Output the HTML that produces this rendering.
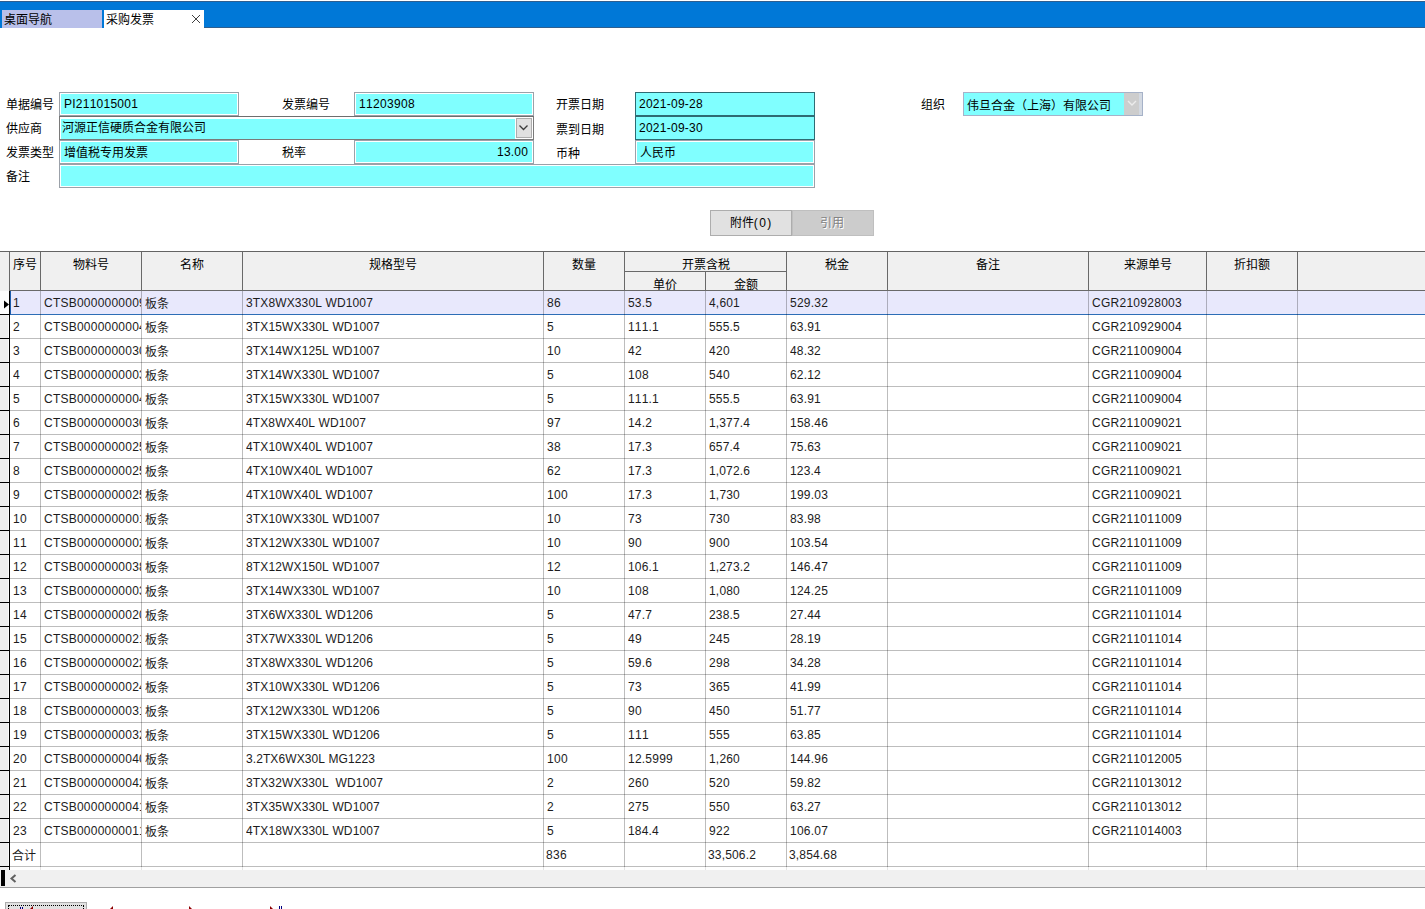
<!DOCTYPE html>
<html lang="zh-CN">
<head>
<meta charset="utf-8">
<title>采购发票</title>
<style>
html,body{margin:0;padding:0;}
body{width:1425px;height:909px;overflow:hidden;background:#fff;position:relative;
 font-family:"Liberation Sans",sans-serif;font-size:12px;color:#000;font-kerning:none;font-variant-ligatures:none;text-rendering:optimizeSpeed;}
div,span{box-sizing:border-box;}
.a{position:absolute;white-space:nowrap;}
.lbl{position:absolute;white-space:nowrap;height:14px;line-height:14px;}
.fld{position:absolute;height:24px;border:1px solid #9ba1a9;background:#80ffff;box-shadow:inset 0 0 0 1px #fff;
 line-height:22px;padding-left:4px;white-space:nowrap;overflow:hidden;}
.date{position:absolute;height:24px;border:1px solid #2e6b73;background:#80ffff;line-height:22px;padding-left:3px;white-space:nowrap;}
.hl{position:absolute;height:1px;}
.vl{position:absolute;width:1px;}
.hd{position:absolute;text-align:center;white-space:nowrap;height:14px;line-height:14px;}
.c{position:absolute;white-space:nowrap;overflow:hidden;height:23px;line-height:25px;color:#1c1c1c;}
.k{position:relative;top:1px;}
</style>
</head>
<body>
<div class="a" style="left:0;top:1px;width:1425px;height:27px;background:#0078d7;border-top:1px solid #2f5f8f;"></div>
<div class="hl" style="left:204px;top:27px;width:1221px;background:#2f5f8f;"></div>
<div class="a" style="left:2px;top:10px;width:100px;height:18px;background:#b9c0ea;line-height:21px;padding-left:2px;overflow:hidden;">桌面导航</div>
<div class="a" style="left:104px;top:10px;width:100px;height:18px;background:#fff;line-height:21px;padding-left:2px;overflow:hidden;">采购发票</div>
<svg class="a" style="left:191px;top:14px;" width="10" height="10" viewBox="0 0 10 10"><path d="M1 1 L9 9 M9 1 L1 9" stroke="#404040" stroke-width="1" fill="none"/></svg>
<div class="lbl" style="left:6px;top:98px;">单据编号</div>
<div class="lbl" style="left:6px;top:122px;">供应商</div>
<div class="lbl" style="left:6px;top:146px;">发票类型</div>
<div class="lbl" style="left:6px;top:170px;">备注</div>
<div class="lbl" style="left:282px;top:98px;">发票编号</div>
<div class="lbl" style="left:282px;top:146px;">税率</div>
<div class="lbl" style="left:556px;top:98px;">开票日期</div>
<div class="lbl" style="left:556px;top:123px;">票到日期</div>
<div class="lbl" style="left:556px;top:147px;">币种</div>
<div class="lbl" style="left:921px;top:98px;">组织</div>
<div class="fld" style="left:59px;top:92px;width:180px;"><span style="letter-spacing:0.24px">PI211015001</span></div>
<div class="fld" style="left:354px;top:92px;width:180px;"><span style="letter-spacing:0.33px">11203908</span></div>
<div class="a" style="left:59px;top:116px;width:475px;height:24px;border:1px solid #7a7a7a;background:#80ffff;border-top-color:#6e6e6e;box-shadow:inset 1px 2px 0 0 #fff;line-height:22px;padding-left:2px;">河源正信硬质合金有限公司</div>
<div class="a" style="left:515px;top:117px;width:18px;height:22px;background:#fff;"></div>
<div class="a" style="left:516px;top:118px;width:16px;height:20px;background:#e1e1e1;border:1px solid #adadad;"></div>
<svg class="a" style="left:519px;top:125px;" width="9" height="6" viewBox="0 0 9 6"><path d="M0.5 0.5 L4.5 4.5 L8.5 0.5" stroke="#3c3c3c" stroke-width="1.3" fill="none"/></svg>
<div class="fld" style="left:59px;top:140px;width:180px;"><span class="k">增值税专用发票</span></div>
<div class="fld" style="left:354px;top:140px;width:180px;text-align:right;padding-right:5px;"><span style="letter-spacing:0.19px">13.00</span></div>
<div class="date" style="left:635px;top:92px;width:180px;"><span style="letter-spacing:0.26px">2021-09-28</span></div>
<div class="date" style="left:635px;top:116px;width:180px;"><span style="letter-spacing:0.26px">2021-09-30</span></div>
<div class="fld" style="left:635px;top:140px;width:180px;"><span class="k">人民币</span></div>
<div class="fld" style="left:59px;top:164px;width:756px;"></div>
<div class="a" style="left:963px;top:92px;width:180px;height:24px;border:1px solid #a6b2c8;background:#80ffff;line-height:26px;padding-left:3px;overflow:hidden;">伟旦合金（上海）有限公司</div>
<div class="a" style="left:1124px;top:93px;width:15px;height:22px;background:#cdcdcd;"></div>
<div class="a" style="left:1139px;top:93px;width:3px;height:22px;background:#d3d9e2;"></div>
<svg class="a" style="left:1127px;top:100px;" width="10" height="7" viewBox="0 0 10 7"><path d="M1 1 L5 5 L9 1" stroke="#ececec" stroke-width="1.4" fill="none"/></svg>
<div class="a" style="left:710px;top:210px;width:82px;height:26px;background:#e1e1e1;border:1px solid #adadad;text-align:center;line-height:24px;padding-right:1px;">附件<span style="letter-spacing:1.3px;margin-right:-1.3px;">(0)</span></div>
<div class="a" style="left:792px;top:210px;width:82px;height:26px;background:#cccccc;border:1px solid #bfbfbf;text-align:center;line-height:24px;color:#838383;text-shadow:1px 1px 0 #fff;padding-right:3px;">引用</div>
<div class="a" style="left:0;top:251px;width:1425px;height:40px;background:#f0f0f0;border-top:1px solid #646464;"></div>
<div class="hl" style="left:9px;top:290px;width:1416px;background:#696969;"></div>
<div class="vl" style="left:9px;top:252px;height:38px;background:#696969;"></div>
<div class="vl" style="left:40px;top:252px;height:38px;background:#696969;"></div>
<div class="vl" style="left:141px;top:252px;height:38px;background:#696969;"></div>
<div class="vl" style="left:242px;top:252px;height:38px;background:#696969;"></div>
<div class="vl" style="left:543px;top:252px;height:38px;background:#696969;"></div>
<div class="vl" style="left:624px;top:252px;height:38px;background:#696969;"></div>
<div class="vl" style="left:705px;top:272px;height:18px;background:#696969;"></div>
<div class="vl" style="left:786px;top:252px;height:38px;background:#696969;"></div>
<div class="vl" style="left:887px;top:252px;height:38px;background:#696969;"></div>
<div class="vl" style="left:1088px;top:252px;height:38px;background:#696969;"></div>
<div class="vl" style="left:1206px;top:252px;height:38px;background:#696969;"></div>
<div class="vl" style="left:1297px;top:252px;height:38px;background:#696969;"></div>
<div class="hl" style="left:625px;top:271px;width:161px;background:#696969;"></div>
<div class="hd" style="left:10px;top:258px;width:30px;">序号</div>
<div class="hd" style="left:41px;top:258px;width:100px;">物料号</div>
<div class="hd" style="left:142px;top:258px;width:100px;">名称</div>
<div class="hd" style="left:243px;top:258px;width:300px;">规格型号</div>
<div class="hd" style="left:544px;top:258px;width:80px;">数量</div>
<div class="hd" style="left:625px;top:258px;width:161px;">开票含税</div>
<div class="hd" style="left:625px;top:278px;width:80px;">单价</div>
<div class="hd" style="left:706px;top:278px;width:80px;">金额</div>
<div class="hd" style="left:787px;top:258px;width:100px;">税金</div>
<div class="hd" style="left:888px;top:258px;width:200px;">备注</div>
<div class="hd" style="left:1089px;top:258px;width:117px;">来源单号</div>
<div class="hd" style="left:1207px;top:258px;width:90px;">折扣额</div>
<div class="a" style="left:0;top:291px;width:9px;height:579px;background:#eeeeee;border-right:1px solid #fafafa;"></div>
<div class="a" style="left:0;top:291px;width:9px;height:23px;background:#fcfcfc;"></div>
<div class="a" style="left:10px;top:291px;width:1415px;height:23px;background:#e8e8fc;"></div>
<div class="hl" style="left:10px;top:314px;width:1415px;background:#2d6db6;"></div>
<div class="hl" style="left:0;top:314px;width:10px;background:#000;"></div>
<div class="hl" style="left:10px;top:338px;width:1415px;background:rgba(0,0,0,0.26);"></div>
<div class="hl" style="left:0;top:338px;width:10px;background:#000;"></div>
<div class="hl" style="left:10px;top:362px;width:1415px;background:rgba(0,0,0,0.26);"></div>
<div class="hl" style="left:0;top:362px;width:10px;background:#000;"></div>
<div class="hl" style="left:10px;top:386px;width:1415px;background:rgba(0,0,0,0.26);"></div>
<div class="hl" style="left:0;top:386px;width:10px;background:#000;"></div>
<div class="hl" style="left:10px;top:410px;width:1415px;background:rgba(0,0,0,0.26);"></div>
<div class="hl" style="left:0;top:410px;width:10px;background:#000;"></div>
<div class="hl" style="left:10px;top:434px;width:1415px;background:rgba(0,0,0,0.26);"></div>
<div class="hl" style="left:0;top:434px;width:10px;background:#000;"></div>
<div class="hl" style="left:10px;top:458px;width:1415px;background:rgba(0,0,0,0.26);"></div>
<div class="hl" style="left:0;top:458px;width:10px;background:#000;"></div>
<div class="hl" style="left:10px;top:482px;width:1415px;background:rgba(0,0,0,0.26);"></div>
<div class="hl" style="left:0;top:482px;width:10px;background:#000;"></div>
<div class="hl" style="left:10px;top:506px;width:1415px;background:rgba(0,0,0,0.26);"></div>
<div class="hl" style="left:0;top:506px;width:10px;background:#000;"></div>
<div class="hl" style="left:10px;top:530px;width:1415px;background:rgba(0,0,0,0.26);"></div>
<div class="hl" style="left:0;top:530px;width:10px;background:#000;"></div>
<div class="hl" style="left:10px;top:554px;width:1415px;background:rgba(0,0,0,0.26);"></div>
<div class="hl" style="left:0;top:554px;width:10px;background:#000;"></div>
<div class="hl" style="left:10px;top:578px;width:1415px;background:rgba(0,0,0,0.26);"></div>
<div class="hl" style="left:0;top:578px;width:10px;background:#000;"></div>
<div class="hl" style="left:10px;top:602px;width:1415px;background:rgba(0,0,0,0.26);"></div>
<div class="hl" style="left:0;top:602px;width:10px;background:#000;"></div>
<div class="hl" style="left:10px;top:626px;width:1415px;background:rgba(0,0,0,0.26);"></div>
<div class="hl" style="left:0;top:626px;width:10px;background:#000;"></div>
<div class="hl" style="left:10px;top:650px;width:1415px;background:rgba(0,0,0,0.26);"></div>
<div class="hl" style="left:0;top:650px;width:10px;background:#000;"></div>
<div class="hl" style="left:10px;top:674px;width:1415px;background:rgba(0,0,0,0.26);"></div>
<div class="hl" style="left:0;top:674px;width:10px;background:#000;"></div>
<div class="hl" style="left:10px;top:698px;width:1415px;background:rgba(0,0,0,0.26);"></div>
<div class="hl" style="left:0;top:698px;width:10px;background:#000;"></div>
<div class="hl" style="left:10px;top:722px;width:1415px;background:rgba(0,0,0,0.26);"></div>
<div class="hl" style="left:0;top:722px;width:10px;background:#000;"></div>
<div class="hl" style="left:10px;top:746px;width:1415px;background:rgba(0,0,0,0.26);"></div>
<div class="hl" style="left:0;top:746px;width:10px;background:#000;"></div>
<div class="hl" style="left:10px;top:770px;width:1415px;background:rgba(0,0,0,0.26);"></div>
<div class="hl" style="left:0;top:770px;width:10px;background:#000;"></div>
<div class="hl" style="left:10px;top:794px;width:1415px;background:rgba(0,0,0,0.26);"></div>
<div class="hl" style="left:0;top:794px;width:10px;background:#000;"></div>
<div class="hl" style="left:10px;top:818px;width:1415px;background:rgba(0,0,0,0.26);"></div>
<div class="hl" style="left:0;top:818px;width:10px;background:#000;"></div>
<div class="hl" style="left:10px;top:842px;width:1415px;background:rgba(0,0,0,0.26);"></div>
<div class="hl" style="left:0;top:842px;width:10px;background:#000;"></div>
<div class="hl" style="left:10px;top:866px;width:1415px;background:rgba(0,0,0,0.26);"></div>
<div class="hl" style="left:0;top:866px;width:10px;background:#000;"></div>
<div class="vl" style="left:9px;top:291px;height:579px;background:#000;"></div>
<div class="vl" style="left:40px;top:291px;height:576px;background:rgba(0,0,0,0.26);"></div>
<div class="vl" style="left:40px;top:867px;height:3px;background:rgba(0,0,0,0.10);"></div>
<div class="vl" style="left:141px;top:291px;height:576px;background:rgba(0,0,0,0.26);"></div>
<div class="vl" style="left:141px;top:867px;height:3px;background:rgba(0,0,0,0.10);"></div>
<div class="vl" style="left:242px;top:291px;height:576px;background:rgba(0,0,0,0.26);"></div>
<div class="vl" style="left:242px;top:867px;height:3px;background:rgba(0,0,0,0.10);"></div>
<div class="vl" style="left:543px;top:291px;height:576px;background:rgba(0,0,0,0.26);"></div>
<div class="vl" style="left:543px;top:867px;height:3px;background:rgba(0,0,0,0.10);"></div>
<div class="vl" style="left:624px;top:291px;height:576px;background:rgba(0,0,0,0.26);"></div>
<div class="vl" style="left:624px;top:867px;height:3px;background:rgba(0,0,0,0.10);"></div>
<div class="vl" style="left:705px;top:291px;height:576px;background:rgba(0,0,0,0.26);"></div>
<div class="vl" style="left:705px;top:867px;height:3px;background:rgba(0,0,0,0.10);"></div>
<div class="vl" style="left:786px;top:291px;height:576px;background:rgba(0,0,0,0.26);"></div>
<div class="vl" style="left:786px;top:867px;height:3px;background:rgba(0,0,0,0.10);"></div>
<div class="vl" style="left:887px;top:291px;height:576px;background:rgba(0,0,0,0.26);"></div>
<div class="vl" style="left:887px;top:867px;height:3px;background:rgba(0,0,0,0.10);"></div>
<div class="vl" style="left:1088px;top:291px;height:576px;background:rgba(0,0,0,0.26);"></div>
<div class="vl" style="left:1088px;top:867px;height:3px;background:rgba(0,0,0,0.10);"></div>
<div class="vl" style="left:1206px;top:291px;height:576px;background:rgba(0,0,0,0.26);"></div>
<div class="vl" style="left:1206px;top:867px;height:3px;background:rgba(0,0,0,0.10);"></div>
<div class="vl" style="left:1297px;top:291px;height:576px;background:rgba(0,0,0,0.26);"></div>
<div class="vl" style="left:1297px;top:867px;height:3px;background:rgba(0,0,0,0.10);"></div>
<div class="vl" style="left:10px;top:291px;height:24px;background:#1d5cab;"></div>
<svg class="a" style="left:4px;top:300px;" width="6" height="9" viewBox="0 0 6 9"><path d="M0 0.5 L5 4.5 L0 8.5 Z" fill="#000"/></svg>
<div class="c" style="left:13px;top:291px;width:27px;"><span style="letter-spacing:0.33px">1</span></div>
<div class="c" style="left:44px;top:291px;width:97px;"><span style="letter-spacing:0.23px">CTSB0000000009</span></div>
<div class="c" style="left:145px;top:291px;width:97px;"><span class="k">板条</span></div>
<div class="c" style="left:246px;top:291px;width:297px;"><span style="letter-spacing:0.13px">3TX8WX330L WD1007</span></div>
<div class="c" style="left:547px;top:291px;width:77px;"><span style="letter-spacing:0.33px">86</span></div>
<div class="c" style="left:628px;top:291px;width:77px;"><span style="letter-spacing:0.16px">53.5</span></div>
<div class="c" style="left:709px;top:291px;width:77px;"><span style="letter-spacing:0.19px">4,601</span></div>
<div class="c" style="left:790px;top:291px;width:97px;"><span style="letter-spacing:0.22px">529.32</span></div>
<div class="c" style="left:1092px;top:291px;width:114px;"><span style="letter-spacing:0.27px">CGR210928003</span></div>
<div class="c" style="left:13px;top:315px;width:27px;"><span style="letter-spacing:0.33px">2</span></div>
<div class="c" style="left:44px;top:315px;width:97px;"><span style="letter-spacing:0.23px">CTSB0000000004</span></div>
<div class="c" style="left:145px;top:315px;width:97px;"><span class="k">板条</span></div>
<div class="c" style="left:246px;top:315px;width:297px;"><span style="letter-spacing:0.14px">3TX15WX330L WD1007</span></div>
<div class="c" style="left:547px;top:315px;width:77px;"><span style="letter-spacing:0.33px">5</span></div>
<div class="c" style="left:628px;top:315px;width:77px;"><span style="letter-spacing:0.19px">111.1</span></div>
<div class="c" style="left:709px;top:315px;width:77px;"><span style="letter-spacing:0.19px">555.5</span></div>
<div class="c" style="left:790px;top:315px;width:97px;"><span style="letter-spacing:0.19px">63.91</span></div>
<div class="c" style="left:1092px;top:315px;width:114px;"><span style="letter-spacing:0.27px">CGR210929004</span></div>
<div class="c" style="left:13px;top:339px;width:27px;"><span style="letter-spacing:0.33px">3</span></div>
<div class="c" style="left:44px;top:339px;width:97px;"><span style="letter-spacing:0.23px">CTSB0000000030</span></div>
<div class="c" style="left:145px;top:339px;width:97px;"><span class="k">板条</span></div>
<div class="c" style="left:246px;top:339px;width:297px;"><span style="letter-spacing:0.14px">3TX14WX125L WD1007</span></div>
<div class="c" style="left:547px;top:339px;width:77px;"><span style="letter-spacing:0.33px">10</span></div>
<div class="c" style="left:628px;top:339px;width:77px;"><span style="letter-spacing:0.33px">42</span></div>
<div class="c" style="left:709px;top:339px;width:77px;"><span style="letter-spacing:0.33px">420</span></div>
<div class="c" style="left:790px;top:339px;width:97px;"><span style="letter-spacing:0.19px">48.32</span></div>
<div class="c" style="left:1092px;top:339px;width:114px;"><span style="letter-spacing:0.27px">CGR211009004</span></div>
<div class="c" style="left:13px;top:363px;width:27px;"><span style="letter-spacing:0.33px">4</span></div>
<div class="c" style="left:44px;top:363px;width:97px;"><span style="letter-spacing:0.23px">CTSB0000000003</span></div>
<div class="c" style="left:145px;top:363px;width:97px;"><span class="k">板条</span></div>
<div class="c" style="left:246px;top:363px;width:297px;"><span style="letter-spacing:0.14px">3TX14WX330L WD1007</span></div>
<div class="c" style="left:547px;top:363px;width:77px;"><span style="letter-spacing:0.33px">5</span></div>
<div class="c" style="left:628px;top:363px;width:77px;"><span style="letter-spacing:0.33px">108</span></div>
<div class="c" style="left:709px;top:363px;width:77px;"><span style="letter-spacing:0.33px">540</span></div>
<div class="c" style="left:790px;top:363px;width:97px;"><span style="letter-spacing:0.19px">62.12</span></div>
<div class="c" style="left:1092px;top:363px;width:114px;"><span style="letter-spacing:0.27px">CGR211009004</span></div>
<div class="c" style="left:13px;top:387px;width:27px;"><span style="letter-spacing:0.33px">5</span></div>
<div class="c" style="left:44px;top:387px;width:97px;"><span style="letter-spacing:0.23px">CTSB0000000004</span></div>
<div class="c" style="left:145px;top:387px;width:97px;"><span class="k">板条</span></div>
<div class="c" style="left:246px;top:387px;width:297px;"><span style="letter-spacing:0.14px">3TX15WX330L WD1007</span></div>
<div class="c" style="left:547px;top:387px;width:77px;"><span style="letter-spacing:0.33px">5</span></div>
<div class="c" style="left:628px;top:387px;width:77px;"><span style="letter-spacing:0.19px">111.1</span></div>
<div class="c" style="left:709px;top:387px;width:77px;"><span style="letter-spacing:0.19px">555.5</span></div>
<div class="c" style="left:790px;top:387px;width:97px;"><span style="letter-spacing:0.19px">63.91</span></div>
<div class="c" style="left:1092px;top:387px;width:114px;"><span style="letter-spacing:0.27px">CGR211009004</span></div>
<div class="c" style="left:13px;top:411px;width:27px;"><span style="letter-spacing:0.33px">6</span></div>
<div class="c" style="left:44px;top:411px;width:97px;"><span style="letter-spacing:0.23px">CTSB0000000030</span></div>
<div class="c" style="left:145px;top:411px;width:97px;"><span class="k">板条</span></div>
<div class="c" style="left:246px;top:411px;width:297px;"><span style="letter-spacing:0.12px">4TX8WX40L WD1007</span></div>
<div class="c" style="left:547px;top:411px;width:77px;"><span style="letter-spacing:0.33px">97</span></div>
<div class="c" style="left:628px;top:411px;width:77px;"><span style="letter-spacing:0.16px">14.2</span></div>
<div class="c" style="left:709px;top:411px;width:77px;"><span style="letter-spacing:0.14px">1,377.4</span></div>
<div class="c" style="left:790px;top:411px;width:97px;"><span style="letter-spacing:0.22px">158.46</span></div>
<div class="c" style="left:1092px;top:411px;width:114px;"><span style="letter-spacing:0.27px">CGR211009021</span></div>
<div class="c" style="left:13px;top:435px;width:27px;"><span style="letter-spacing:0.33px">7</span></div>
<div class="c" style="left:44px;top:435px;width:97px;"><span style="letter-spacing:0.23px">CTSB0000000025</span></div>
<div class="c" style="left:145px;top:435px;width:97px;"><span class="k">板条</span></div>
<div class="c" style="left:246px;top:435px;width:297px;"><span style="letter-spacing:0.13px">4TX10WX40L WD1007</span></div>
<div class="c" style="left:547px;top:435px;width:77px;"><span style="letter-spacing:0.33px">38</span></div>
<div class="c" style="left:628px;top:435px;width:77px;"><span style="letter-spacing:0.16px">17.3</span></div>
<div class="c" style="left:709px;top:435px;width:77px;"><span style="letter-spacing:0.19px">657.4</span></div>
<div class="c" style="left:790px;top:435px;width:97px;"><span style="letter-spacing:0.19px">75.63</span></div>
<div class="c" style="left:1092px;top:435px;width:114px;"><span style="letter-spacing:0.27px">CGR211009021</span></div>
<div class="c" style="left:13px;top:459px;width:27px;"><span style="letter-spacing:0.33px">8</span></div>
<div class="c" style="left:44px;top:459px;width:97px;"><span style="letter-spacing:0.23px">CTSB0000000025</span></div>
<div class="c" style="left:145px;top:459px;width:97px;"><span class="k">板条</span></div>
<div class="c" style="left:246px;top:459px;width:297px;"><span style="letter-spacing:0.13px">4TX10WX40L WD1007</span></div>
<div class="c" style="left:547px;top:459px;width:77px;"><span style="letter-spacing:0.33px">62</span></div>
<div class="c" style="left:628px;top:459px;width:77px;"><span style="letter-spacing:0.16px">17.3</span></div>
<div class="c" style="left:709px;top:459px;width:77px;"><span style="letter-spacing:0.14px">1,072.6</span></div>
<div class="c" style="left:790px;top:459px;width:97px;"><span style="letter-spacing:0.19px">123.4</span></div>
<div class="c" style="left:1092px;top:459px;width:114px;"><span style="letter-spacing:0.27px">CGR211009021</span></div>
<div class="c" style="left:13px;top:483px;width:27px;"><span style="letter-spacing:0.33px">9</span></div>
<div class="c" style="left:44px;top:483px;width:97px;"><span style="letter-spacing:0.23px">CTSB0000000025</span></div>
<div class="c" style="left:145px;top:483px;width:97px;"><span class="k">板条</span></div>
<div class="c" style="left:246px;top:483px;width:297px;"><span style="letter-spacing:0.13px">4TX10WX40L WD1007</span></div>
<div class="c" style="left:547px;top:483px;width:77px;"><span style="letter-spacing:0.33px">100</span></div>
<div class="c" style="left:628px;top:483px;width:77px;"><span style="letter-spacing:0.16px">17.3</span></div>
<div class="c" style="left:709px;top:483px;width:77px;"><span style="letter-spacing:0.19px">1,730</span></div>
<div class="c" style="left:790px;top:483px;width:97px;"><span style="letter-spacing:0.22px">199.03</span></div>
<div class="c" style="left:1092px;top:483px;width:114px;"><span style="letter-spacing:0.27px">CGR211009021</span></div>
<div class="c" style="left:13px;top:507px;width:27px;"><span style="letter-spacing:0.33px">10</span></div>
<div class="c" style="left:44px;top:507px;width:97px;"><span style="letter-spacing:0.23px">CTSB0000000001</span></div>
<div class="c" style="left:145px;top:507px;width:97px;"><span class="k">板条</span></div>
<div class="c" style="left:246px;top:507px;width:297px;"><span style="letter-spacing:0.14px">3TX10WX330L WD1007</span></div>
<div class="c" style="left:547px;top:507px;width:77px;"><span style="letter-spacing:0.33px">10</span></div>
<div class="c" style="left:628px;top:507px;width:77px;"><span style="letter-spacing:0.33px">73</span></div>
<div class="c" style="left:709px;top:507px;width:77px;"><span style="letter-spacing:0.33px">730</span></div>
<div class="c" style="left:790px;top:507px;width:97px;"><span style="letter-spacing:0.19px">83.98</span></div>
<div class="c" style="left:1092px;top:507px;width:114px;"><span style="letter-spacing:0.27px">CGR211011009</span></div>
<div class="c" style="left:13px;top:531px;width:27px;"><span style="letter-spacing:0.33px">11</span></div>
<div class="c" style="left:44px;top:531px;width:97px;"><span style="letter-spacing:0.23px">CTSB0000000002</span></div>
<div class="c" style="left:145px;top:531px;width:97px;"><span class="k">板条</span></div>
<div class="c" style="left:246px;top:531px;width:297px;"><span style="letter-spacing:0.14px">3TX12WX330L WD1007</span></div>
<div class="c" style="left:547px;top:531px;width:77px;"><span style="letter-spacing:0.33px">10</span></div>
<div class="c" style="left:628px;top:531px;width:77px;"><span style="letter-spacing:0.33px">90</span></div>
<div class="c" style="left:709px;top:531px;width:77px;"><span style="letter-spacing:0.33px">900</span></div>
<div class="c" style="left:790px;top:531px;width:97px;"><span style="letter-spacing:0.22px">103.54</span></div>
<div class="c" style="left:1092px;top:531px;width:114px;"><span style="letter-spacing:0.27px">CGR211011009</span></div>
<div class="c" style="left:13px;top:555px;width:27px;"><span style="letter-spacing:0.33px">12</span></div>
<div class="c" style="left:44px;top:555px;width:97px;"><span style="letter-spacing:0.23px">CTSB0000000038</span></div>
<div class="c" style="left:145px;top:555px;width:97px;"><span class="k">板条</span></div>
<div class="c" style="left:246px;top:555px;width:297px;"><span style="letter-spacing:0.14px">8TX12WX150L WD1007</span></div>
<div class="c" style="left:547px;top:555px;width:77px;"><span style="letter-spacing:0.33px">12</span></div>
<div class="c" style="left:628px;top:555px;width:77px;"><span style="letter-spacing:0.19px">106.1</span></div>
<div class="c" style="left:709px;top:555px;width:77px;"><span style="letter-spacing:0.14px">1,273.2</span></div>
<div class="c" style="left:790px;top:555px;width:97px;"><span style="letter-spacing:0.22px">146.47</span></div>
<div class="c" style="left:1092px;top:555px;width:114px;"><span style="letter-spacing:0.27px">CGR211011009</span></div>
<div class="c" style="left:13px;top:579px;width:27px;"><span style="letter-spacing:0.33px">13</span></div>
<div class="c" style="left:44px;top:579px;width:97px;"><span style="letter-spacing:0.23px">CTSB0000000003</span></div>
<div class="c" style="left:145px;top:579px;width:97px;"><span class="k">板条</span></div>
<div class="c" style="left:246px;top:579px;width:297px;"><span style="letter-spacing:0.14px">3TX14WX330L WD1007</span></div>
<div class="c" style="left:547px;top:579px;width:77px;"><span style="letter-spacing:0.33px">10</span></div>
<div class="c" style="left:628px;top:579px;width:77px;"><span style="letter-spacing:0.33px">108</span></div>
<div class="c" style="left:709px;top:579px;width:77px;"><span style="letter-spacing:0.19px">1,080</span></div>
<div class="c" style="left:790px;top:579px;width:97px;"><span style="letter-spacing:0.22px">124.25</span></div>
<div class="c" style="left:1092px;top:579px;width:114px;"><span style="letter-spacing:0.27px">CGR211011009</span></div>
<div class="c" style="left:13px;top:603px;width:27px;"><span style="letter-spacing:0.33px">14</span></div>
<div class="c" style="left:44px;top:603px;width:97px;"><span style="letter-spacing:0.23px">CTSB0000000020</span></div>
<div class="c" style="left:145px;top:603px;width:97px;"><span class="k">板条</span></div>
<div class="c" style="left:246px;top:603px;width:297px;"><span style="letter-spacing:0.13px">3TX6WX330L WD1206</span></div>
<div class="c" style="left:547px;top:603px;width:77px;"><span style="letter-spacing:0.33px">5</span></div>
<div class="c" style="left:628px;top:603px;width:77px;"><span style="letter-spacing:0.16px">47.7</span></div>
<div class="c" style="left:709px;top:603px;width:77px;"><span style="letter-spacing:0.19px">238.5</span></div>
<div class="c" style="left:790px;top:603px;width:97px;"><span style="letter-spacing:0.19px">27.44</span></div>
<div class="c" style="left:1092px;top:603px;width:114px;"><span style="letter-spacing:0.27px">CGR211011014</span></div>
<div class="c" style="left:13px;top:627px;width:27px;"><span style="letter-spacing:0.33px">15</span></div>
<div class="c" style="left:44px;top:627px;width:97px;"><span style="letter-spacing:0.23px">CTSB0000000021</span></div>
<div class="c" style="left:145px;top:627px;width:97px;"><span class="k">板条</span></div>
<div class="c" style="left:246px;top:627px;width:297px;"><span style="letter-spacing:0.13px">3TX7WX330L WD1206</span></div>
<div class="c" style="left:547px;top:627px;width:77px;"><span style="letter-spacing:0.33px">5</span></div>
<div class="c" style="left:628px;top:627px;width:77px;"><span style="letter-spacing:0.33px">49</span></div>
<div class="c" style="left:709px;top:627px;width:77px;"><span style="letter-spacing:0.33px">245</span></div>
<div class="c" style="left:790px;top:627px;width:97px;"><span style="letter-spacing:0.19px">28.19</span></div>
<div class="c" style="left:1092px;top:627px;width:114px;"><span style="letter-spacing:0.27px">CGR211011014</span></div>
<div class="c" style="left:13px;top:651px;width:27px;"><span style="letter-spacing:0.33px">16</span></div>
<div class="c" style="left:44px;top:651px;width:97px;"><span style="letter-spacing:0.23px">CTSB0000000022</span></div>
<div class="c" style="left:145px;top:651px;width:97px;"><span class="k">板条</span></div>
<div class="c" style="left:246px;top:651px;width:297px;"><span style="letter-spacing:0.13px">3TX8WX330L WD1206</span></div>
<div class="c" style="left:547px;top:651px;width:77px;"><span style="letter-spacing:0.33px">5</span></div>
<div class="c" style="left:628px;top:651px;width:77px;"><span style="letter-spacing:0.16px">59.6</span></div>
<div class="c" style="left:709px;top:651px;width:77px;"><span style="letter-spacing:0.33px">298</span></div>
<div class="c" style="left:790px;top:651px;width:97px;"><span style="letter-spacing:0.19px">34.28</span></div>
<div class="c" style="left:1092px;top:651px;width:114px;"><span style="letter-spacing:0.27px">CGR211011014</span></div>
<div class="c" style="left:13px;top:675px;width:27px;"><span style="letter-spacing:0.33px">17</span></div>
<div class="c" style="left:44px;top:675px;width:97px;"><span style="letter-spacing:0.23px">CTSB0000000024</span></div>
<div class="c" style="left:145px;top:675px;width:97px;"><span class="k">板条</span></div>
<div class="c" style="left:246px;top:675px;width:297px;"><span style="letter-spacing:0.14px">3TX10WX330L WD1206</span></div>
<div class="c" style="left:547px;top:675px;width:77px;"><span style="letter-spacing:0.33px">5</span></div>
<div class="c" style="left:628px;top:675px;width:77px;"><span style="letter-spacing:0.33px">73</span></div>
<div class="c" style="left:709px;top:675px;width:77px;"><span style="letter-spacing:0.33px">365</span></div>
<div class="c" style="left:790px;top:675px;width:97px;"><span style="letter-spacing:0.19px">41.99</span></div>
<div class="c" style="left:1092px;top:675px;width:114px;"><span style="letter-spacing:0.27px">CGR211011014</span></div>
<div class="c" style="left:13px;top:699px;width:27px;"><span style="letter-spacing:0.33px">18</span></div>
<div class="c" style="left:44px;top:699px;width:97px;"><span style="letter-spacing:0.23px">CTSB0000000031</span></div>
<div class="c" style="left:145px;top:699px;width:97px;"><span class="k">板条</span></div>
<div class="c" style="left:246px;top:699px;width:297px;"><span style="letter-spacing:0.14px">3TX12WX330L WD1206</span></div>
<div class="c" style="left:547px;top:699px;width:77px;"><span style="letter-spacing:0.33px">5</span></div>
<div class="c" style="left:628px;top:699px;width:77px;"><span style="letter-spacing:0.33px">90</span></div>
<div class="c" style="left:709px;top:699px;width:77px;"><span style="letter-spacing:0.33px">450</span></div>
<div class="c" style="left:790px;top:699px;width:97px;"><span style="letter-spacing:0.19px">51.77</span></div>
<div class="c" style="left:1092px;top:699px;width:114px;"><span style="letter-spacing:0.27px">CGR211011014</span></div>
<div class="c" style="left:13px;top:723px;width:27px;"><span style="letter-spacing:0.33px">19</span></div>
<div class="c" style="left:44px;top:723px;width:97px;"><span style="letter-spacing:0.23px">CTSB0000000032</span></div>
<div class="c" style="left:145px;top:723px;width:97px;"><span class="k">板条</span></div>
<div class="c" style="left:246px;top:723px;width:297px;"><span style="letter-spacing:0.14px">3TX15WX330L WD1206</span></div>
<div class="c" style="left:547px;top:723px;width:77px;"><span style="letter-spacing:0.33px">5</span></div>
<div class="c" style="left:628px;top:723px;width:77px;"><span style="letter-spacing:0.33px">111</span></div>
<div class="c" style="left:709px;top:723px;width:77px;"><span style="letter-spacing:0.33px">555</span></div>
<div class="c" style="left:790px;top:723px;width:97px;"><span style="letter-spacing:0.19px">63.85</span></div>
<div class="c" style="left:1092px;top:723px;width:114px;"><span style="letter-spacing:0.27px">CGR211011014</span></div>
<div class="c" style="left:13px;top:747px;width:27px;"><span style="letter-spacing:0.33px">20</span></div>
<div class="c" style="left:44px;top:747px;width:97px;"><span style="letter-spacing:0.23px">CTSB0000000040</span></div>
<div class="c" style="left:145px;top:747px;width:97px;"><span class="k">板条</span></div>
<div class="c" style="left:246px;top:747px;width:297px;"><span style="letter-spacing:0.09px">3.2TX6WX30L MG1223</span></div>
<div class="c" style="left:547px;top:747px;width:77px;"><span style="letter-spacing:0.33px">100</span></div>
<div class="c" style="left:628px;top:747px;width:77px;"><span style="letter-spacing:0.23px">12.5999</span></div>
<div class="c" style="left:709px;top:747px;width:77px;"><span style="letter-spacing:0.19px">1,260</span></div>
<div class="c" style="left:790px;top:747px;width:97px;"><span style="letter-spacing:0.22px">144.96</span></div>
<div class="c" style="left:1092px;top:747px;width:114px;"><span style="letter-spacing:0.27px">CGR211012005</span></div>
<div class="c" style="left:13px;top:771px;width:27px;"><span style="letter-spacing:0.33px">21</span></div>
<div class="c" style="left:44px;top:771px;width:97px;"><span style="letter-spacing:0.23px">CTSB0000000042</span></div>
<div class="c" style="left:145px;top:771px;width:97px;"><span class="k">板条</span></div>
<div class="c" style="left:246px;top:771px;width:297px;"><span style="letter-spacing:0.12px">3TX32WX330L&nbsp; WD1007</span></div>
<div class="c" style="left:547px;top:771px;width:77px;"><span style="letter-spacing:0.33px">2</span></div>
<div class="c" style="left:628px;top:771px;width:77px;"><span style="letter-spacing:0.33px">260</span></div>
<div class="c" style="left:709px;top:771px;width:77px;"><span style="letter-spacing:0.33px">520</span></div>
<div class="c" style="left:790px;top:771px;width:97px;"><span style="letter-spacing:0.19px">59.82</span></div>
<div class="c" style="left:1092px;top:771px;width:114px;"><span style="letter-spacing:0.27px">CGR211013012</span></div>
<div class="c" style="left:13px;top:795px;width:27px;"><span style="letter-spacing:0.33px">22</span></div>
<div class="c" style="left:44px;top:795px;width:97px;"><span style="letter-spacing:0.23px">CTSB0000000041</span></div>
<div class="c" style="left:145px;top:795px;width:97px;"><span class="k">板条</span></div>
<div class="c" style="left:246px;top:795px;width:297px;"><span style="letter-spacing:0.14px">3TX35WX330L WD1007</span></div>
<div class="c" style="left:547px;top:795px;width:77px;"><span style="letter-spacing:0.33px">2</span></div>
<div class="c" style="left:628px;top:795px;width:77px;"><span style="letter-spacing:0.33px">275</span></div>
<div class="c" style="left:709px;top:795px;width:77px;"><span style="letter-spacing:0.33px">550</span></div>
<div class="c" style="left:790px;top:795px;width:97px;"><span style="letter-spacing:0.19px">63.27</span></div>
<div class="c" style="left:1092px;top:795px;width:114px;"><span style="letter-spacing:0.27px">CGR211013012</span></div>
<div class="c" style="left:13px;top:819px;width:27px;"><span style="letter-spacing:0.33px">23</span></div>
<div class="c" style="left:44px;top:819px;width:97px;"><span style="letter-spacing:0.23px">CTSB0000000011</span></div>
<div class="c" style="left:145px;top:819px;width:97px;"><span class="k">板条</span></div>
<div class="c" style="left:246px;top:819px;width:297px;"><span style="letter-spacing:0.14px">4TX18WX330L WD1007</span></div>
<div class="c" style="left:547px;top:819px;width:77px;"><span style="letter-spacing:0.33px">5</span></div>
<div class="c" style="left:628px;top:819px;width:77px;"><span style="letter-spacing:0.19px">184.4</span></div>
<div class="c" style="left:709px;top:819px;width:77px;"><span style="letter-spacing:0.33px">922</span></div>
<div class="c" style="left:790px;top:819px;width:97px;"><span style="letter-spacing:0.22px">106.07</span></div>
<div class="c" style="left:1092px;top:819px;width:114px;"><span style="letter-spacing:0.27px">CGR211014003</span></div>
<div class="c" style="left:12px;top:843px;width:28px;"><span class="k">合计</span></div>
<div class="c" style="left:546px;top:843px;width:78px;"><span style="letter-spacing:0.33px">836</span></div>
<div class="c" style="left:708px;top:843px;width:78px;"><span style="letter-spacing:0.16px">33,506.2</span></div>
<div class="c" style="left:789px;top:843px;width:98px;"><span style="letter-spacing:0.16px">3,854.68</span></div>
<div class="a" style="left:0;top:870px;width:1425px;height:18px;background:#f0f0f0;border-bottom:1px solid #a0a0a0;"></div>
<div class="a" style="left:1px;top:870px;width:4px;height:16px;background:#000;"></div>
<svg class="a" style="left:9px;top:874px;" width="9" height="9" viewBox="0 0 9 9"><path d="M6.5 1 L2.5 4.5 L6.5 8" stroke="#606060" stroke-width="2" fill="none"/></svg>
<div class="a" style="left:5px;top:902px;width:82px;height:24px;background:#e1e1e1;border:1px solid #adadad;"></div>
<div class="a" style="left:8px;top:905px;width:76px;height:18px;border:1px dotted #000;"></div>
<div class="a" style="left:20px;top:907px;width:1px;height:8px;background:#000080;"></div>
<div class="a" style="left:22px;top:907px;width:1px;height:8px;background:#000080;"></div>
<svg class="a" style="left:30px;top:906px;" width="3" height="3" viewBox="0 0 3 3"><path d="M3 0 L3 3 L0 3 Z" fill="#8b0000"/></svg>
<svg class="a" style="left:110px;top:906px;" width="3" height="3" viewBox="0 0 3 3"><path d="M3 0 L3 3 L0 3 Z" fill="#8b0000"/></svg>
<svg class="a" style="left:189px;top:906px;" width="3" height="3" viewBox="0 0 3 3"><path d="M0 0 L3 3 L0 3 Z" fill="#8b0000"/></svg>
<svg class="a" style="left:270px;top:906px;" width="3" height="3" viewBox="0 0 3 3"><path d="M0 0 L3 3 L0 3 Z" fill="#8b0000"/></svg>
<div class="a" style="left:279px;top:906px;width:1px;height:8px;background:#000080;"></div>
<div class="a" style="left:281px;top:906px;width:1px;height:8px;background:#000080;"></div>
</body>
</html>
